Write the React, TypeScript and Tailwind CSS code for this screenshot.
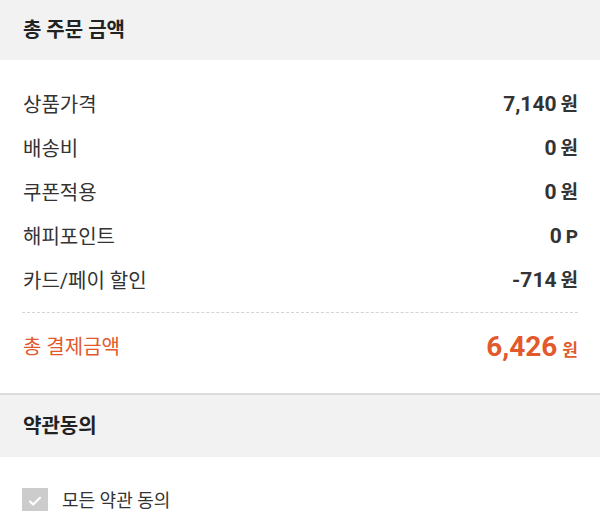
const rows = [
  { label: '상품가격', value: '7,140', unit: '원' },
  { label: '배송비', value: '0', unit: '원' },
  { label: '쿠폰적용', value: '0', unit: '원' },
  { label: '해피포인트', value: '0', unit: 'P' },
  { label: '카드/페이 할인', value: '-714', unit: '원' },
];

export default function App() {
  return (
    <div
      className="w-[600px] h-[511px] overflow-hidden bg-white text-[#333]"
      style={{ fontFamily: "Roboto, 'Noto Sans CJK KR', sans-serif" }}
    >
      <div className="h-[60px] bg-[#f2f2f2] flex items-center px-[23px]">
        <h2 className="text-[20px] font-bold text-[#222]">총 주문 금액</h2>
      </div>

      <div className="px-[22px] pt-[23px]">
        {rows.map((r) => (
          <div key={r.label} className="h-[44px] flex items-center justify-between pl-px">
            <span className="text-[20px] text-[#333]">{r.label}</span>
            <span className="flex items-baseline gap-[4px] font-bold text-[#333]">
              <span className="text-[21px]">{r.value}</span>
              <span className="text-[19px]">{r.unit}</span>
            </span>
          </div>
        ))}
        <div className="mt-[9px] border-t border-dashed border-[#d4d4d4]" />
        <div className="h-[70px] flex items-center justify-between pb-[2px] pl-px">
          <span className="text-[20px] text-[#e2592c]">총 결제금액</span>
          <span className="flex items-baseline gap-[5px] font-bold text-[#e2592c]">
            <span className="text-[28px]">6,426</span>
            <span className="text-[17px]">원</span>
          </span>
        </div>
      </div>

      <div className="mt-[10px] border-t-2 border-[#dcdcdc] h-[64px] bg-[#f2f2f2] flex items-center px-[23px]">
        <h2 className="text-[20px] font-bold text-[#222]">약관동의</h2>
      </div>

      <div className="px-[22px] pt-[31px] flex items-center gap-[14px]">
        <span className="w-[26px] h-[26px] shrink-0 bg-[#cccccc] flex items-center justify-center">
          <svg width="16" height="16" viewBox="0 0 16 16" fill="none">
            <path d="M3 8.5l3.2 3L13 4.8" stroke="#fff" strokeWidth="2.2" strokeLinecap="round" strokeLinejoin="round" />
          </svg>
        </span>
        <span className="text-[18px] leading-[26px] text-[#333]">모든 약관 동의</span>
      </div>
    </div>
  );
}
